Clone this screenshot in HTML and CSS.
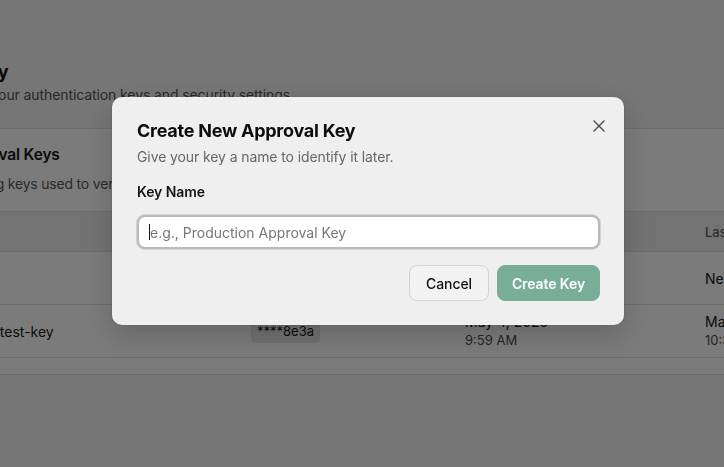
FILE: index.html
```html
<!DOCTYPE html>
<html lang="en">
<head>
<meta charset="utf-8">
<title>Security – Approval Keys</title>
<link rel="stylesheet" href="styles.css">
</head>
<body>
<div class="page">
  <header class="page-header">
    <h1 class="page-title">Security</h1>
    <p class="page-sub">Manage your authentication keys and security settings</p>
  </header>
  <section class="card">
    <h2 class="card-title">Approval Keys</h2>
    <p class="card-sub">Signing keys used to verify approval requests from your devices</p>
    <div class="table">
      <div class="row head">
        <div class="cell">Name</div>
        <div class="cell">Key</div>
        <div class="cell">Created</div>
        <div class="cell">Last Used</div>
      </div>
      <div class="row">
        <div class="cell"></div>
        <div class="cell"><span class="badge">****a41c</span></div>
        <div class="cell"><div class="date">May 4, 2025</div><div class="time">10:31 AM</div></div>
        <div class="cell"><div class="date">Never</div></div>
      </div>
      <div class="row">
        <div class="cell"><span class="name">demo-test-key</span></div>
        <div class="cell"><span class="badge">****8e3a</span></div>
        <div class="cell"><div class="date">May 4, 2025</div><div class="time">9:59 AM</div></div>
        <div class="cell"><div class="date">May 4, 2025</div><div class="time">10:31 AM</div></div>
      </div>
    </div>
  </section>
</div>

<div class="overlay"></div>

<div class="modal" role="dialog" aria-labelledby="modal-title">
  <button class="close" aria-label="Close">
    <svg width="12" height="12" viewBox="0 0 12 12" fill="none" stroke="#4a4a4a" stroke-width="1.4" stroke-linecap="round"><path d="M1 1l10 10M11 1L1 11"/></svg>
  </button>
  <h3 class="modal-title" id="modal-title">Create New Approval Key</h3>
  <p class="modal-sub">Give your key a name to identify it later.</p>
  <label class="label" for="keyname">Key Name</label>
  <div class="field">
    <input id="keyname" class="input" type="text" placeholder="e.g., Production Approval Key">
    <span class="caret"></span>
  </div>
  <div class="actions">
    <button class="btn btn-cancel">Cancel</button>
    <button class="btn btn-primary">Create Key</button>
  </div>
</div>
</body>
</html>
```
FILE: styles.css
```css
* { box-sizing: border-box; }
html, body { margin: 0; height: 100%; }
body {
  font-family: Inter, "Noto Sans", "Liberation Sans", sans-serif;
  background: #ececec;
  color: #161616;
  overflow: hidden;
}
.page {
  margin-left: -84px;
  width: 1000px;
  padding: 60px 24px 0;
}
.page-header {
  margin-left: -6px;
  margin-bottom: 23px;
}
.page-title {
  margin: 0;
  font-size: 18px;
  line-height: 24px;
  font-weight: 700;
  color: #141414;
}
.page-sub {
  margin: 1px 0 0;
  font-size: 14px;
  line-height: 20px;
  color: #505050;
  letter-spacing: -0.1px;
}

.card {
  background: #f6f6f6;
  border-top: 1px solid #dadada;
  border-bottom: 1px solid #dadada;
  padding: 15px 0 16px;
}
.card-title {
  margin: 0;
  padding: 0 16px 0 14px;
  font-size: 15.5px;
  line-height: 22px;
  font-weight: 600;
  letter-spacing: -0.2px;
  color: #141414;
}
.card-sub {
  margin: 8px 0 0;
  padding: 0 16px;
  font-size: 14px;
  line-height: 20px;
  color: #555;
  letter-spacing: -0.2px;
}
.table {
  margin-top: 17px;
  border-bottom: 1px solid #dadada;
}
.row {
  display: grid;
  grid-template-columns: 295px 214px 240px 227px;
  border-top: 1px solid #dadada;
  height: 53px;
  align-items: center;
}
.row.head {
  height: 40px;
  background: #e6e6e6;
  font-size: 13px;
  font-weight: 500;
  color: #5a5a5a;
}
.cell { padding: 0 16px; }
.name { font-size: 14px; color: #151515; }
.badge {
  display: inline-block;
  font-size: 13px;
  line-height: 24px;
  padding: 0 6px;
  border-radius: 4px;
  background: #e2e2e2;
  color: #1a1a1a;
}
.date { font-size: 14px; line-height: 19px; color: #151515; }
.time { font-size: 13px; line-height: 19px; color: #4a4a4a; }

.overlay {
  position: fixed;
  inset: 0;
  background: rgba(0, 0, 0, 0.5);
}
.modal {
  position: fixed;
  left: 112px;
  top: 97px;
  width: 512px;
  background: #efefef;
  border-radius: 10px;
  padding: 24px 24px 24px 25px;
  box-shadow: 0 10px 30px rgba(0, 0, 0, 0.18), 0 0 0 1px rgba(0, 0, 0, 0.04);
}
.close {
  position: absolute;
  top: 16px;
  right: 14px;
  width: 22px;
  height: 22px;
  border: 0;
  padding: 0;
  background: transparent;
  display: flex;
  align-items: center;
  justify-content: center;
  margin-top: 2px;
}
.modal-title {
  margin: 0;
  font-size: 18px;
  line-height: 20px;
  font-weight: 700;
  letter-spacing: -0.25px;
  color: #0d0d0d;
}
.modal-sub {
  margin: 6px 0 0;
  font-size: 14px;
  line-height: 20px;
  color: #666;
  letter-spacing: -0.1px;
}
.label {
  display: block;
  margin-top: 15px;
  font-size: 14px;
  line-height: 20px;
  font-weight: 600;
  letter-spacing: -0.1px;
  color: #151515;
}
.field {
  position: relative;
  margin-top: 13px;
}
.input {
  display: block;
  width: 100%;
  height: 34px;
  border: 2px solid #bababa;
  box-shadow: 0 0 0 1px #d2d2d2;
  border-radius: 8px;
  background: #fff;
  padding: 0 11px;
  font: inherit;
  font-size: 14px;
  color: #111;
  outline: none;
}
.input::placeholder { color: #777; }
.caret {
  position: absolute;
  left: 12px;
  top: 9px;
  width: 1px;
  height: 16px;
  background: #111;
}
.actions {
  display: flex;
  justify-content: flex-end;
  gap: 8px;
  margin-top: 16px;
}
.btn {
  height: 36px;
  border-radius: 8px;
  font: inherit;
  font-size: 14px;
  padding: 0;
  letter-spacing: -0.1px;
}
.btn-cancel {
  width: 80px;
  background: #f2f2f2;
  border: 1px solid #d4d4d4;
  color: #111;
  font-weight: 500;
}
.btn-primary {
  width: 103px;
  background: #78ad98;
  border: 1px solid #78ad98;
  color: #fff;
  font-weight: 600;
}
```
